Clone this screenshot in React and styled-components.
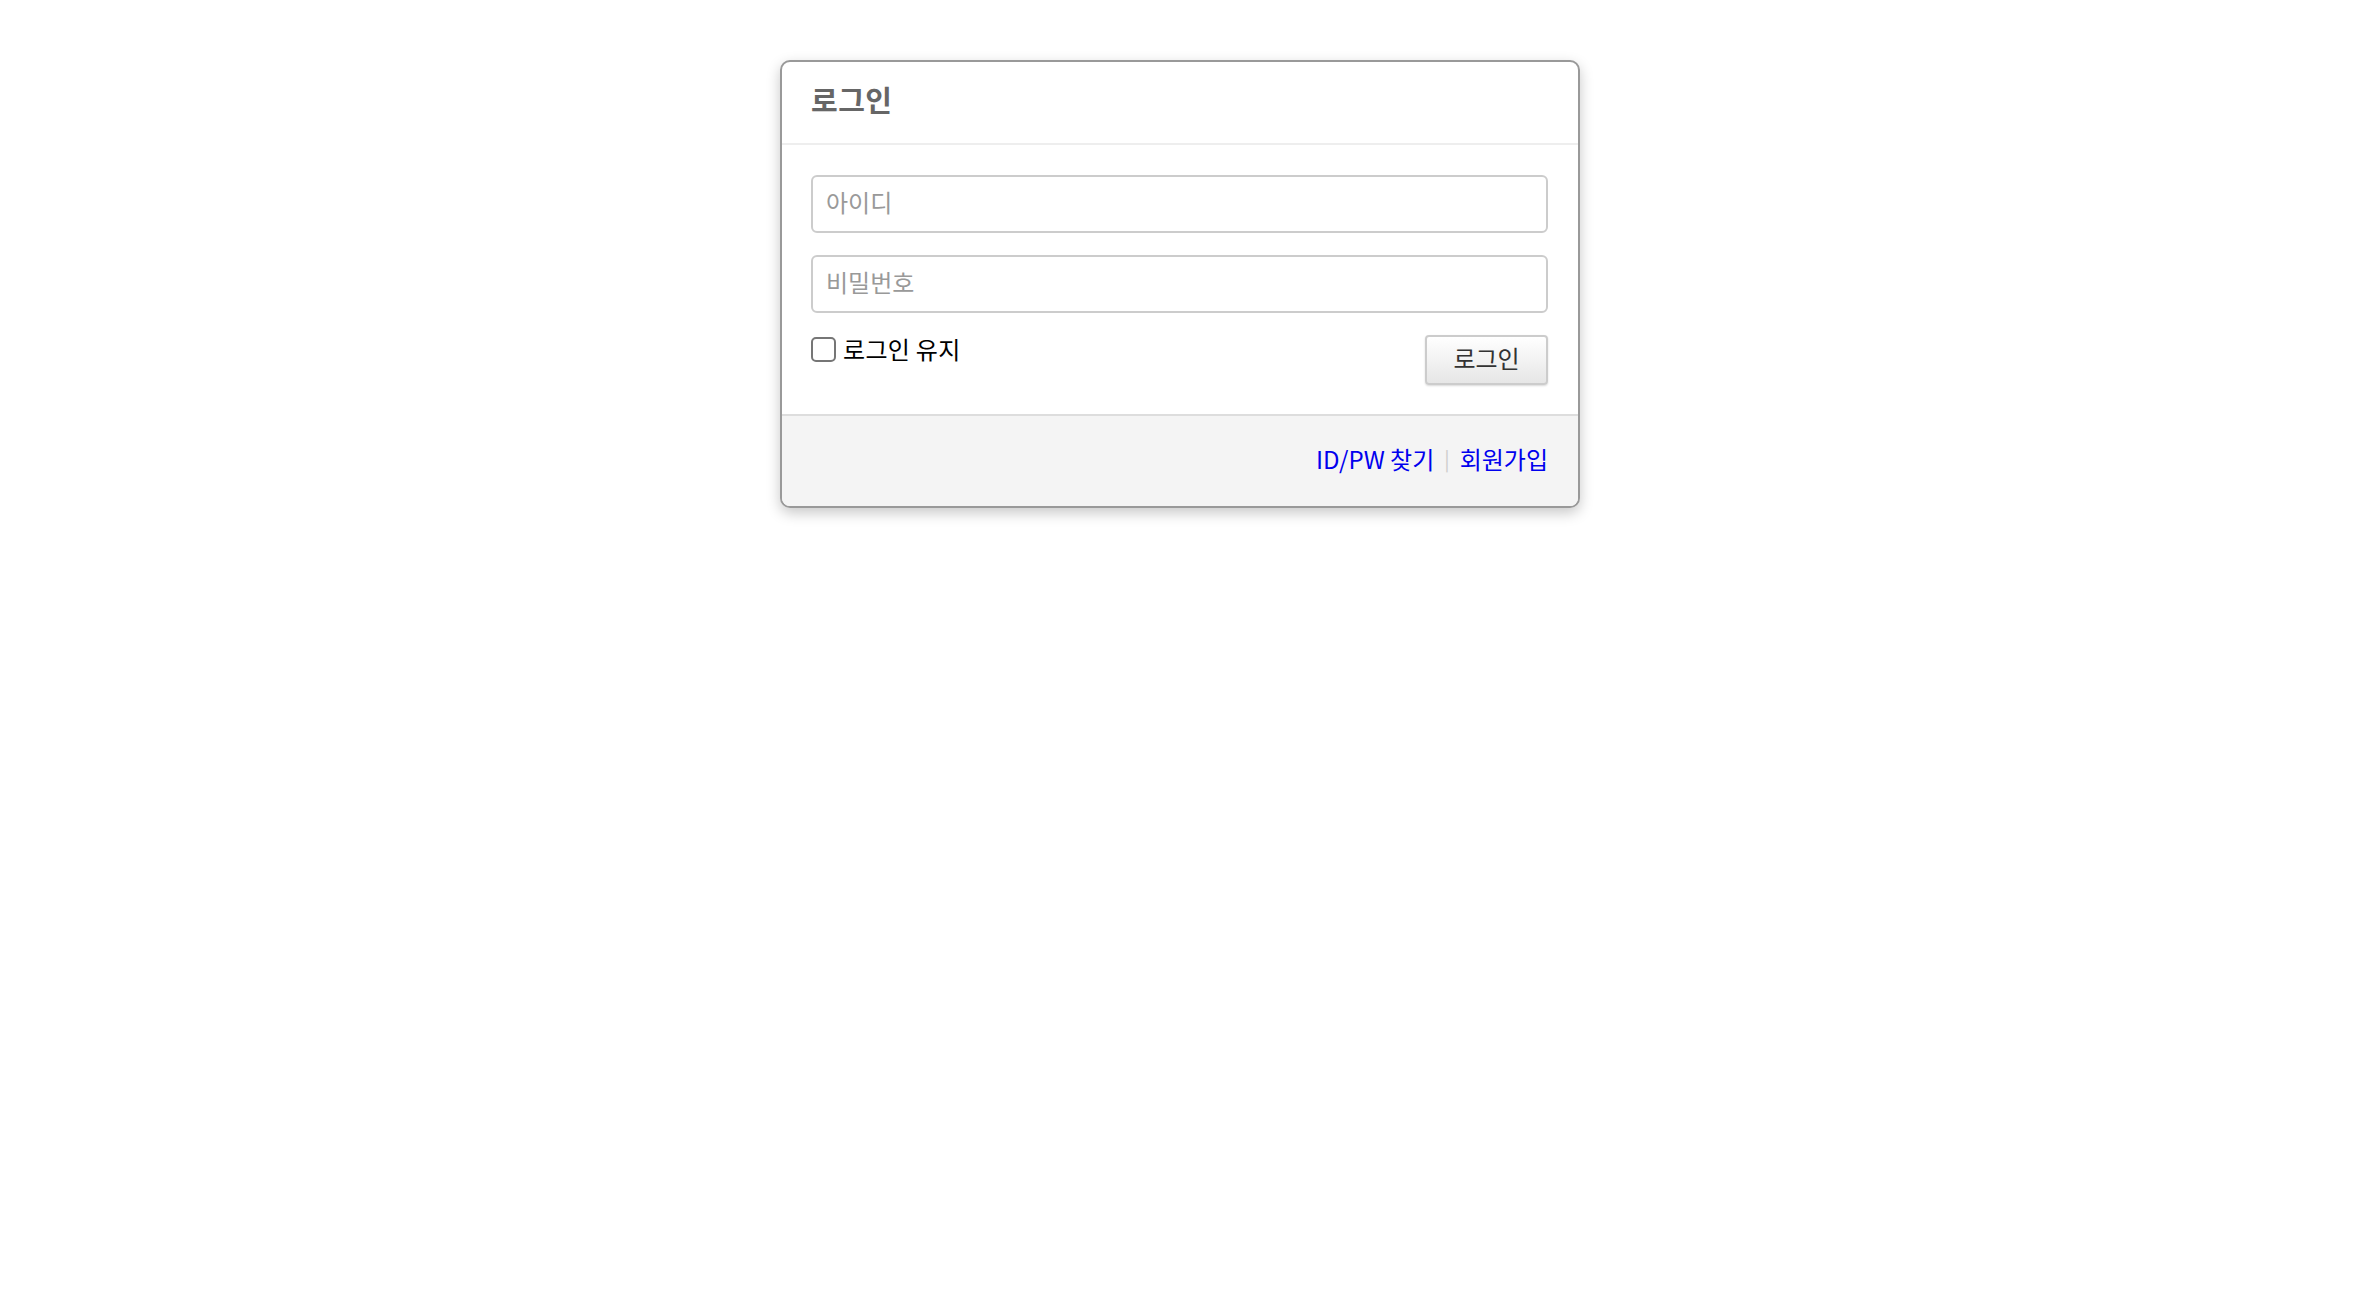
import styled, { createGlobalStyle } from "styled-components";

const GlobalStyle = createGlobalStyle`
    html, body {
        margin: 0;
        padding: 0;
        background: #ffffff;
        font-family: "Noto Sans CJK KR", "Noto Sans", sans-serif;
    }
    * {
        box-sizing: border-box;
    }
`

export default function App() {
    return (
        <Page>
            <GlobalStyle />
            <LoginCard>
                <CardHeader>
                    <Title>로그인</Title>
                </CardHeader>
                <CardBody>
                    <TextInput type="text" placeholder="아이디" />
                    <TextInput type="password" placeholder="비밀번호" />
                    <ActionRow>
                        <KeepLabel>
                            <CheckBox type="checkbox" />
                            로그인 유지
                        </KeepLabel>
                        <LoginButton>로그인</LoginButton>
                    </ActionRow>
                </CardBody>
                <CardFooter>
                    <FooterLink href="#">ID/PW 찾기</FooterLink>
                    <Divider>|</Divider>
                    <FooterLink href="#">회원가입</FooterLink>
                </CardFooter>
            </LoginCard>
        </Page>
    )
}

const Page = styled.div`
    display: flex;
    justify-content: center;
    padding-top: 60px;
    min-height: 100vh;
`

const LoginCard = styled.div`
    width: 800px;
    height: fit-content;
    border: 2px solid #999999;
    border-radius: 10px;
    overflow: hidden;
    background: #ffffff;
    box-shadow: 0 5px 14px rgba(0, 0, 0, 0.22);
`

const CardHeader = styled.div`
    display: flex;
    align-items: center;
    height: 83px;
    padding: 0 29px 7px;
    border-bottom: 2px solid #eeeeee;
`

const Title = styled.h3`
    margin: 0;
    font-size: 29px;
    font-weight: 700;
    color: #666666;
    letter-spacing: 0.5px;
`

const CardBody = styled.div`
    display: flex;
    flex-direction: column;
    gap: 22px;
    padding: 30px 30px 29px 29px;
`

const TextInput = styled.input`
    width: 100%;
    height: 58px;
    padding: 0 13px 6px;
    border: 2px solid #cccccc;
    border-radius: 6px;
    font-family: inherit;
    font-size: 24px;
    color: #333;
    outline: none;
    &::placeholder {
        color: #999999;
    }
`

const ActionRow = styled.div`
    display: flex;
    justify-content: space-between;
    align-items: flex-start;
`

const KeepLabel = styled.label`
    display: flex;
    align-items: center;
    gap: 7px;
    margin-top: 1px;
    font-size: 24px;
    color: #000000;
    line-height: 26px;
    letter-spacing: 0.3px;
`

const CheckBox = styled.input`
    appearance: none;
    margin: 0;
    width: 25px;
    height: 25px;
    border: 2px solid #767676;
    border-radius: 5px;
    background: #ffffff;
`

const LoginButton = styled.button`
    width: 123px;
    height: 50px;
    border: 2px solid #cccccc;
    border-radius: 4px;
    background: linear-gradient(#ffffff, #e6e6e6);
    box-shadow: 0 1px 2px rgba(0, 0, 0, 0.15);
    font-family: inherit;
    font-size: 24px;
    color: #333333;
    padding: 0 0 6px;
`

const CardFooter = styled.div`
    display: flex;
    justify-content: flex-end;
    align-items: center;
    gap: 10px;
    height: 92px;
    padding: 0 30px 6px;
    background: #f4f4f4;
    border-top: 2px solid #dddddd;
    font-size: 24px;
`

const FooterLink = styled.a`
    color: #0000ee;
    text-decoration: none;
`

const Divider = styled.span`
    color: #cccccc;
    font-size: 20px;
`
